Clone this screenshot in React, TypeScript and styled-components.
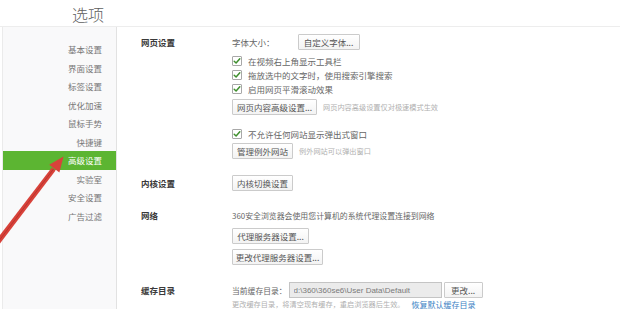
import React from 'react';
import styled, { createGlobalStyle, css } from 'styled-components';

const GlobalStyle = createGlobalStyle`
  html, body { margin: 0; padding: 0; background: #fff; }
  body { font-family: "Noto Sans CJK SC", "Noto Sans", sans-serif; }
  * { box-sizing: border-box; }
`;

const Window = styled.div`
  position: relative;
  width: 620px;
  height: 309px;
  overflow: hidden;
  background: #fff;
  display: flex;
  flex-direction: column;
`;

const Header = styled.header`
  flex: none;
  height: 27px;
  border-bottom: 1px solid #ededed;
  display: flex;
  align-items: center;
  padding-top: 2px;
`;

const TitleBox = styled.div`
  width: 104px;
  text-align: right;
`;

const Title = styled.h1`
  margin: 0;
  font-size: 16px;
  font-weight: 300;
  line-height: 20px;
  color: #606060;
`;

const Body = styled.div`
  flex: 1;
  display: flex;
  min-height: 0;
`;

const Sidebar = styled.nav`
  flex: none;
  width: 115px;
  margin-left: 2px;
  border-left: 1px solid #ebebeb;
  border-right: 1px solid #e2e2e2;
  background: #f9f9fa;
  padding-top: 13px;
`;

const MenuItem = styled.div<{ $active?: boolean }>`
  height: 18.5px;
  line-height: 18.5px;
  padding-right: 14px;
  text-align: right;
  font-size: 8.5px;
  color: #777;
  ${(p) =>
    p.$active &&
    css`
      background: #5cb532;
      color: #fff;
    `}
`;

const Content = styled.main`
  flex: 1;
  padding: 7px 0 0 24px;
  color: #666;
  font-size: 8.5px;
`;

const Section = styled.section<{ $mt?: number }>`
  display: grid;
  grid-template-columns: 91px 1fr;
  margin-top: ${(p) => p.$mt ?? 0}px;
`;

const SectionLabel = styled.div`
  font-weight: 700;
  font-size: 8.5px;
  line-height: 16px;
  color: #3a3a3a;
`;

const Column = styled.div`
  display: flex;
  flex-direction: column;
  align-items: flex-start;
`;

const Row = styled.div<{ $mt?: number; $h?: number; $gap?: number }>`
  display: flex;
  align-items: center;
  height: ${(p) => p.$h ?? 16}px;
  margin-top: ${(p) => p.$mt ?? 0}px;
  gap: ${(p) => p.$gap ?? 6}px;
  white-space: nowrap;
`;

const Text = styled.span<{ $size?: number }>`
  font-size: ${(p) => p.$size ?? 8.5}px;
  color: #666;
`;

const Hint = styled.span`
  font-size: 7.2px;
  color: #b0b0b0;
`;

const Link = styled.a`
  font-size: 8px;
  color: #3b7fc4;
  text-decoration: none;
`;

const Button = styled.button<{ $w: number }>`
  width: ${(p) => p.$w}px;
  height: 16px;
  padding: 0;
  border: 1px solid #cbcbcb;
  border-radius: 1px;
  background: linear-gradient(#ffffff, #f3f3f3);
  font-family: inherit;
  font-size: 8.5px;
  color: #555;
  display: flex;
  align-items: center;
  justify-content: center;
`;

const PathInput = styled.input`
  width: 153px;
  height: 16px;
  border: 1px solid #c4c4c4;
  background: #ebebeb;
  padding: 0 4px;
  font-family: "Liberation Sans", Arial, sans-serif;
  font-size: 8px;
  color: #7a7a7a;
  outline: none;
`;

const CheckBox = styled.span`
  width: 10px;
  height: 10px;
  border: 1px solid #a8a8a8;
  border-radius: 1px;
  background: #fff;
  display: inline-flex;
  align-items: center;
  justify-content: center;
  flex: none;
`;

const ArrowOverlay = styled.svg`
  position: absolute;
  left: 0;
  top: 140px;
  width: 80px;
  height: 110px;
  pointer-events: none;
`;

const Check = ({ label, mt }: { label: string; mt?: number }) => (
  <Row $h={14} $mt={mt} $gap={6}>
    <CheckBox>
      <svg width="8" height="8" viewBox="0 0 8 8">
        <path d="M1.2 4.2 L3.1 6 L6.8 1.8" fill="none" stroke="#3f8f2e" strokeWidth="1.5" strokeLinecap="round" strokeLinejoin="round" />
      </svg>
    </CheckBox>
    <Text>{label}</Text>
  </Row>
);

const menu = ['基本设置', '界面设置', '标签设置', '优化加速', '鼠标手势', '快捷键', '高级设置', '实验室', '安全设置', '广告过滤'];

export default function App() {
  return (
    <>
      <GlobalStyle />
      <Window>
        <Header>
          <TitleBox>
            <Title>选项</Title>
          </TitleBox>
        </Header>
        <Body>
          <Sidebar>
            {menu.map((m) => (
              <MenuItem key={m} $active={m === '高级设置'}>
                {m}
              </MenuItem>
            ))}
          </Sidebar>
          <Content>
            <Section>
              <SectionLabel>网页设置</SectionLabel>
              <Column>
                <Row $gap={23}>
                  <Text>字体大小：</Text>
                  <Button $w={62}>自定义字体...</Button>
                </Row>
                <Check label="在视频右上角显示工具栏" mt={4} />
                <Check label="拖放选中的文字时，使用搜索引擎搜索" />
                <Check label="启用网页平滑滚动效果" />
                <Row $mt={3}>
                  <Button $w={85}>网页内容高级设置...</Button>
                  <Hint>网页内容高级设置仅对极速模式生效</Hint>
                </Row>
                <Check label="不允许任何网站显示弹出式窗口" mt={12} />
                <Row $mt={2}>
                  <Button $w={61}>管理例外网站</Button>
                  <Hint>例外网站可以弹出窗口</Hint>
                </Row>
              </Column>
            </Section>
            <Section $mt={16}>
              <SectionLabel>内核设置</SectionLabel>
              <Column>
                <Button $w={61}>内核切换设置</Button>
              </Column>
            </Section>
            <Section $mt={16}>
              <SectionLabel>网络</SectionLabel>
              <Column>
                <Row>
                  <Text $size={7.9}>360安全浏览器会使用您计算机的系统代理设置连接到网络</Text>
                </Row>
                <Row $mt={5}>
                  <Button $w={77}>代理服务器设置...</Button>
                </Row>
                <Row $mt={5}>
                  <Button $w={91}>更改代理服务器设置...</Button>
                </Row>
              </Column>
            </Section>
            <Section $mt={17}>
              <SectionLabel>缓存目录</SectionLabel>
              <Column>
                <Row $gap={2}>
                  <Text $size={7.8}>当前缓存目录：</Text>
                  <PathInput readOnly value="d:\360\360se6\User Data\Default" />
                  <Button $w={39}>更改...</Button>
                </Row>
                <Row $h={12} $gap={7}>
                  <Hint>更改缓存目录，将清空现有缓存，重启浏览器后生效。</Hint>
                  <Link>恢复默认缓存目录</Link>
                </Row>
              </Column>
            </Section>
          </Content>
        </Body>
        <ArrowOverlay viewBox="0 140 80 110">
          <polygon points="-7,244 -3.5,248 55.6,170.4 51.8,167.6" fill="#d8423a" />
          <polygon points="63.5,156.5 59.4,172.6 49.2,164.8" fill="#d8423a" />
          <line x1="-5" y1="246" x2="53.5" y2="169" stroke="#b3302a" strokeWidth="0.8" />
        </ArrowOverlay>
      </Window>
    </>
  );
}
